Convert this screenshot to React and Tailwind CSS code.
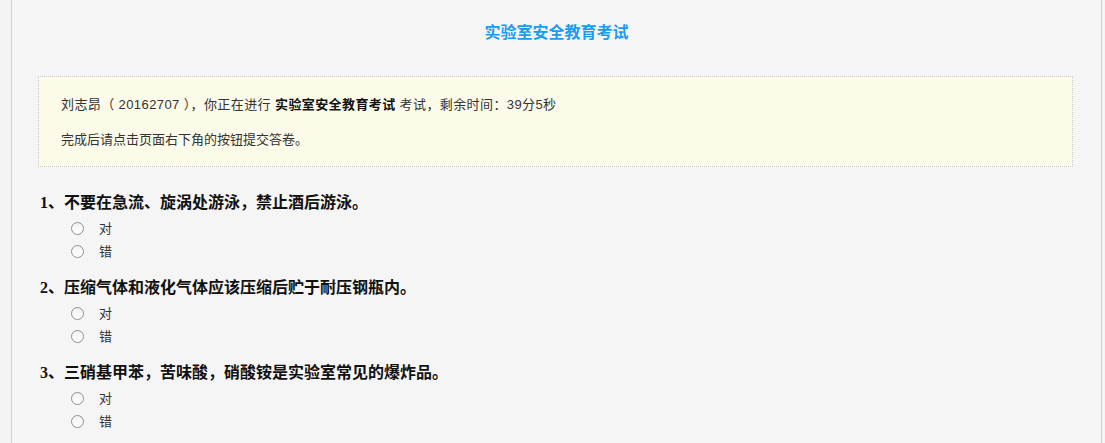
import { useState } from 'react';

const questions = [
  { id: 1, text: '不要在急流、旋涡处游泳，禁止酒后游泳。' },
  { id: 2, text: '压缩气体和液化气体应该压缩后贮于耐压钢瓶内。' },
  { id: 3, text: '三硝基甲苯，苦味酸，硝酸铵是实验室常见的爆炸品。' },
];

const sans = { fontFamily: '"Liberation Sans", "Noto Sans CJK SC", sans-serif' };
const serif = { fontFamily: '"Liberation Serif", "Noto Sans CJK SC", serif' };

function Radio({ checked, onClick, label }) {
  return (
    <label onClick={onClick} className="flex items-center h-[23px] pl-[31px] cursor-pointer">
      <span className="w-[13px] h-[13px] rounded-full border border-[#8f8f8f] bg-gradient-to-b from-[#f2f2f2] to-white flex items-center justify-center">
        {checked && <span className="w-[5px] h-[5px] rounded-full bg-[#333]" />}
      </span>
      <span className="ml-[15px] text-[13px] text-[#333]">{label}</span>
    </label>
  );
}

export default function App() {
  const [answers, setAnswers] = useState({});

  return (
    <div className="min-h-[443px] bg-[#f4f4f4]" style={sans}>
      <div className="ml-[11px] w-[1091px] min-h-[443px] border-l border-r border-[#cfcfcf] bg-[#f5f5f5]">
        <div className="pt-[21px] h-[76px] text-center">
          <h1 className="text-[16px] leading-[24px] font-bold text-[#1a9cf0]">实验室安全教育考试</h1>
        </div>

        {/* 提示 */}
        <div className="ml-[26px] mr-[28px] border border-dotted border-[#c8c8c8] bg-[#fcfbe9] pt-[18px] pb-[16px] pl-[22px] text-[13px] text-[#333]">
          <p className="leading-[20px] tracking-[0.4px]">
            刘志昂（ 20162707 ），你正在进行 <b className="text-[#111]">实验室安全教育考试</b> 考试，剩余时间：39分5秒
          </p>
          <p className="leading-[20px] mt-[15px]">完成后请点击页面右下角的按钮提交答卷。</p>
        </div>

        <div className="mt-[24px] pl-[28px]">
          {questions.map(q => (
            <div key={q.id} className="mb-[13px]">
              <div className="text-[16px] leading-[24px] font-bold text-[#111]" style={serif}>
                {q.id}、{q.text}
              </div>
              <div className="mt-[2px]">
                <Radio label="对" checked={answers[q.id] === 'y'} onClick={() => setAnswers({ ...answers, [q.id]: 'y' })} />
                <Radio label="错" checked={answers[q.id] === 'n'} onClick={() => setAnswers({ ...answers, [q.id]: 'n' })} />
              </div>
            </div>
          ))}
        </div>
      </div>
    </div>
  );
}
